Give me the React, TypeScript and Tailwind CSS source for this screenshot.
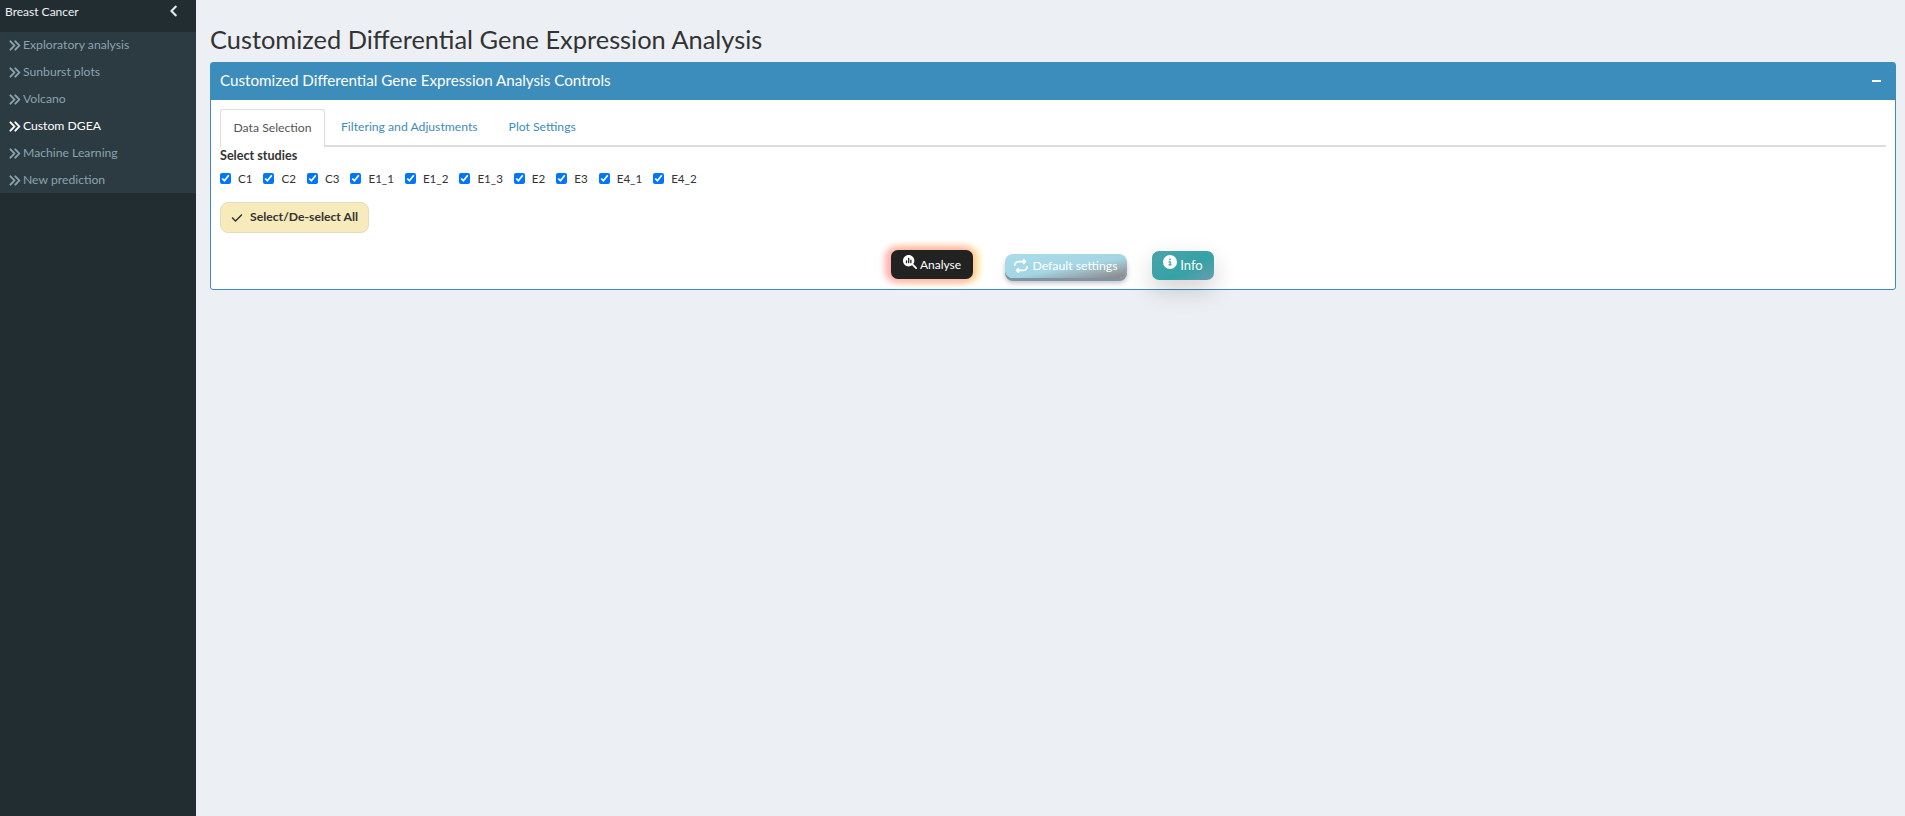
import React from "react";
import { FaAnglesRight, FaAngleLeft, FaCheck, FaMagnifyingGlassChart, FaRepeat, FaCircleInfo } from "react-icons/fa6";

const menu = ["Exploratory analysis", "Sunburst plots", "Volcano", "Custom DGEA", "Machine Learning", "New prediction"];
const studies = ["C1", "C2", "C3", "E1_1", "E1_2", "E1_3", "E2", "E3", "E4_1", "E4_2"];
const font = { fontFamily: '"Lato", "Noto Sans", sans-serif' };

export default function App() {
  return (
    <div className="flex h-[816px] w-[1905px] overflow-hidden bg-[#ecf0f5] text-[#333]" style={font}>
      <aside className="w-[196px] shrink-0 bg-[#222d32]">
        <div className="flex h-[32px] items-start justify-between pl-[5px] pr-[15px] pt-[4px] text-[12px] leading-[16px] text-[#eef2f4]">
          <span>Breast Cancer</span>
          <FaAngleLeft className="stroke-[15] text-[14px]" />
        </div>
        <ul className="h-[161px] bg-[#2c3b41]">
          {menu.map((m) => (
            <li
              key={m}
              className={`flex h-[27px] items-center gap-[2px] pl-[8px] text-[12.2px] ${m === "Custom DGEA" ? "text-white" : "text-[#8aa4af]"}`}
            >
              <FaAnglesRight className="stroke-[12] text-[13px]" />
              <span>{m}</span>
            </li>
          ))}
        </ul>
      </aside>
      <main className="flex-1 pl-[14px] pr-[9px]">
        <h1 className="mb-[3px] pt-[19px] text-[25.4px] leading-[40px] text-[#333]" style={{ fontWeight: 400 }}>
          Customized Differential Gene Expression Analysis
        </h1>
        <section className="h-[228px] rounded-[3px] border border-[#3c8dbc] bg-white">
          <header className="flex h-[37px] items-center justify-between bg-[#3c8dbc] pb-[2px] pl-[9px] pr-[14px] text-[15.2px] text-white">
            <span>Customized Differential Gene Expression Analysis Controls</span>
            <span className="h-[2px] w-[9px] bg-white" />
          </header>
          <div className="px-[9px] pt-[9px]">
            <div className="flex h-[38px] border-b-2 border-[#ddd] text-[12.2px]">
              <div className="mb-[-2px] flex h-[38px] w-[105px] items-center justify-center rounded-t-[3px] border border-b-0 border-[#ddd] bg-white text-[#555]">
                Data Selection
              </div>
              <div className="flex h-[36px] items-center pl-[16px] text-[#3c8dbc]">Filtering and Adjustments</div>
              <div className="flex h-[36px] items-center pl-[31px] text-[#3c8dbc]">Plot Settings</div>
            </div>
            <div className="mt-[1px] text-[12.6px] font-bold leading-[16px]">Select studies</div>
            <div className="mt-[5px] flex h-[20px] items-center gap-[11px] text-[11.6px]">
              {studies.map((s) => (
                <label key={s} className="flex items-center gap-[7px]">
                  <input type="checkbox" defaultChecked className="m-0 h-[11px] w-[11px] accent-[#0075ff]" />
                  <span>{s}</span>
                </label>
              ))}
            </div>
            <button className="mt-[13px] flex h-[31px] w-[149px] items-center justify-center gap-[7px] rounded-[8px] border border-[#e2dcc0] bg-[#f7eabb] text-[12.2px] font-bold text-[#333]">
              <FaCheck className="text-[12px]" />
              Select/De-select All
            </button>
            <div className="relative mt-[17px] flex h-[32px] items-start text-white">
              <button className="ml-[671px] flex h-[29px] w-[82px] items-center justify-center gap-[3px] rounded-[7px] bg-[#222] text-[12px] shadow-[-3px_0_7px_3px_#ffb0b0,3px_0_7px_3px_#ffe08f]">
                <FaMagnifyingGlassChart className="mb-[5px] text-[14px]" />
                Analyse
              </button>
              <button className="ml-[32px] mt-[4px] flex h-[24px] w-[122px] items-center justify-center gap-[4px] rounded-[8px] bg-[linear-gradient(170deg,#a9dce9_0%,#a5d5e4_55%,#9fbcc6_68%,#8a7f80_100%)] text-[12.3px] shadow-[0_3px_0_#7e93a6,0_5px_5px_rgba(0,0,0,0.25)]">
                <FaRepeat className="text-[14px]" />
                Default settings
              </button>
              <button className="ml-[25px] mt-[1px] flex h-[29px] w-[62px] items-center justify-center gap-[3px] rounded-[7px] bg-[linear-gradient(150deg,#49a5aa_0%,#35a2a6_60%,#6b9cb0_100%)] text-[13px] shadow-[0_10px_25px_rgba(0,0,0,0.18)]">
                <FaCircleInfo className="mb-[7px] text-[14px]" />
                Info
              </button>
            </div>
          </div>
        </section>
      </main>
    </div>
  );
}
